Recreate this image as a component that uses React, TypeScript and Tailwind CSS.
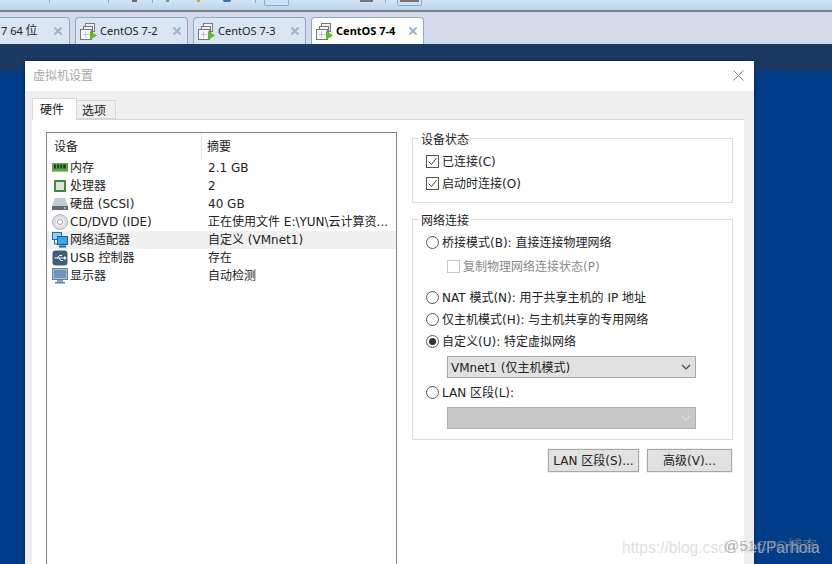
import type { ReactNode } from "react";

function VmIcon() {
  return (
    <svg width="17" height="17" viewBox="0 0 17 17" className="shrink-0">
      <rect x="5.5" y="0.5" width="9" height="8" fill="#f2f2f2" stroke="#777" />
      <rect x="3.500" y="3.500" width="9" height="8" fill="#f2f2f2" stroke="#777" />
      <rect x="0.5" y="6.500" width="11" height="10" fill="#f8f8f8" stroke="#777" />
      <path d="M5.500 8.500v6M3 11.500h6" stroke="#b9c6cf" />
      <path d="M10 8l7 4.500-7 4.500z" fill="#5cb82c" />
    </svg>
  );
}

function TabClose() {
  return (
    <svg width="8" height="8" viewBox="0 0 8 8" className="shrink-0">
      <path d="M0.500 0.500l7 7M7.500 0.500l-7 7" stroke="#9db4cc" strokeWidth="2" />
    </svg>
  );
}

function VmTab({ label, active }: { label: string; active?: boolean }) {
  return (
    <div
      className={`flex h-[27px] w-[113px] items-center rounded-t-[4px] border border-b-0 border-[#8fa8c4] pr-[6px] pl-[4px] font-['Noto_Sans','Noto_Sans_CJK_SC',sans-serif] text-[11px] ${
        active ? "bg-white font-bold text-black" : "bg-[#d9e5f3] text-[#222]"
      }`}
    >
      <VmIcon />
      <span className="ml-[3px] flex-1 whitespace-nowrap">{label}</span>
      <TabClose />
    </div>
  );
}

function MemoryIcon() {
  return (
    <svg width="16" height="16" viewBox="0 0 16 16">
      <rect x="0" y="3" width="16" height="8" fill="#5aa845" />
      <path d="M2 4.500h2v4H2zM5 4.500h2v4H5zM8 4.500h2v4H8zM11 4.500h3v4h-3z" fill="#2f3a2a" />
      <path d="M0 11h16v1H0z" fill="#9cc97e" />
    </svg>
  );
}

function CpuIcon() {
  return (
    <svg width="16" height="16" viewBox="0 0 16 16">
      <rect x="2" y="2" width="12" height="12" fill="#3d8a44" />
      <rect x="4" y="4" width="8" height="8" fill="#dfe6d8" />
    </svg>
  );
}

function DiskIcon() {
  return (
    <svg width="16" height="16" viewBox="0 0 16 16">
      <path d="M3 2h10l3 8H0z" fill="#c3c9d2" />
      <rect x="0" y="10" width="16" height="4" fill="#5f6a79" />
      <rect x="12" y="11.500" width="2" height="1" fill="#dfe6ee" />
    </svg>
  );
}

function CdIcon() {
  return (
    <svg width="16" height="16" viewBox="0 0 16 16">
      <circle cx="8" cy="8" r="7.500" fill="#dcdde0" stroke="#b4b4b8" />
      <circle cx="8" cy="8" r="4.500" fill="#eeeef0" />
      <circle cx="8" cy="8" r="2.500" fill="#fff" stroke="#a4a4a8" />
    </svg>
  );
}

function NetworkIcon() {
  return (
    <svg width="16" height="16" viewBox="0 0 16 16">
      <rect x="0.500" y="0.500" width="9" height="7" fill="#8fd0f4" stroke="#1b6fae" />
      <path d="M2.500 8v4h3" stroke="#1b6fae" fill="none" />
      <rect x="5.500" y="4.500" width="10" height="8" fill="#38a8ea" stroke="#12609e" />
      <path d="M7 14.500h7" stroke="#12609e" strokeWidth="2" />
    </svg>
  );
}

function UsbIcon() {
  return (
    <svg width="16" height="16" viewBox="0 0 16 16">
      <rect x="0.500" y="0.500" width="15" height="15" rx="3" fill="#3f5d7c" />
      <path d="M2.500 8h10M5 8l2.500-2.500H10M7 8l1.500 2.500H11" stroke="#fff" fill="none" />
      <path d="M15 8l-3-2v4z" fill="#fff" />
    </svg>
  );
}

function DisplayIcon() {
  return (
    <svg width="16" height="16" viewBox="0 0 16 16">
      <rect x="0.500" y="0.500" width="15" height="11" fill="#a9bfd8" stroke="#6b7f96" />
      <rect x="2" y="2" width="12" height="8" fill="#6d93bf" />
      <path d="M5 12h6v2H5z" fill="#8ea0b4" />
      <path d="M3 14h10v1.500H3z" fill="#6b7f96" />
    </svg>
  );
}

const devices: { icon: ReactNode; name: string; summary: string; selected?: boolean }[] = [
  { icon: <MemoryIcon />, name: "内存", summary: "2.1 GB" },
  { icon: <CpuIcon />, name: "处理器", summary: "2" },
  { icon: <DiskIcon />, name: "硬盘 (SCSI)", summary: "40 GB" },
  { icon: <CdIcon />, name: "CD/DVD (IDE)", summary: "正在使用文件 E:\\YUN\\云计算资..." },
  { icon: <NetworkIcon />, name: "网络适配器", summary: "自定义 (VMnet1)", selected: true },
  { icon: <UsbIcon />, name: "USB 控制器", summary: "存在" },
  { icon: <DisplayIcon />, name: "显示器", summary: "自动检测" },
];

function CheckBox({ label, checked, disabled }: { label: string; checked?: boolean; disabled?: boolean }) {
  return (
    <div className={`flex h-[22px] items-center ${disabled ? "text-[#8a8a8a]" : "text-[#222]"}`}>
      <span
        className={`flex size-[13px] items-center justify-center border ${
          disabled ? "border-[#c8c8c8]" : "border-[#555]"
        }`}
      >
        {checked ? (
          <svg width="11" height="11" viewBox="0 0 11 11">
            <path d="M1.500 5.500l3 3 5-6.500" fill="none" stroke="#444" />
          </svg>
        ) : null}
      </span>
      <span className="ml-[3px] pt-[2px] whitespace-nowrap">{label}</span>
    </div>
  );
}

function Radio({ label, checked }: { label: string; checked?: boolean }) {
  return (
    <div className="flex h-[22px] items-center text-[#222]">
      <span className="flex size-[13px] items-center justify-center rounded-full border border-[#555]">
        {checked ? <span className="size-[7px] rounded-full bg-[#333]" /> : null}
      </span>
      <span className="ml-[3px] pt-[2px] whitespace-nowrap">{label}</span>
    </div>
  );
}

function Chevron({ color }: { color: string }) {
  return (
    <svg width="10" height="6" viewBox="0 0 10 6">
      <path d="M1 1l4 4 4-4" fill="none" stroke={color} strokeWidth="1.200" />
    </svg>
  );
}

function ToolbarTick({ className }: { className: string }) {
  return <span className={`h-[3px] w-px shrink-0 bg-[#8fa8c4] ${className}`} />;
}

export default function App() {
  return (
    <div className="relative flex h-[564px] w-[832px] flex-col overflow-hidden bg-[#003c88] font-['DejaVu_Sans','Noto_Sans_CJK_SC',sans-serif] text-[12px]">
      {/* app toolbar, only its bottom edge is in the shot */}
      <div className="flex h-[10px] items-start bg-gradient-to-b from-[#d3e3f3] to-[#bcd4ec]">
        <ToolbarTick className="ml-[49px]" />
        <ToolbarTick className="ml-[58px]" />
        <span className="ml-[23px] h-[2px] w-[5px] shrink-0 bg-[#6d6d6d]" />
        <ToolbarTick className="ml-[15px]" />
        <span className="ml-[13px] h-[2px] w-[3px] shrink-0 bg-[#6f9a72]" />
        <span className="ml-[28px] h-[2px] w-[3px] shrink-0 bg-[#e09a3c]" />
        <span className="ml-[23px] h-[2px] w-[8px] shrink-0 rounded-b-full bg-[#2f6fb5]" />
        <ToolbarTick className="ml-[24px]" />
        <span className="ml-[8px] h-[6px] w-[25px] shrink-0 rounded-b-[2px] border border-t-0 border-[#8fa8c4] bg-[#cfe0f6]" />
        <span className="ml-[71px] h-[2px] w-[13px] shrink-0 bg-[#77746f]" />
        <ToolbarTick className="ml-[12px]" />
        <span className="ml-[11px] h-[6px] w-[25px] shrink-0 rounded-b-[2px] border border-t-0 border-[#8fa8c4] bg-[#cfe0f6] px-[2px]">
          <span className="block h-[2px] bg-[#77746f]" />
        </span>
      </div>
      <div className="h-[2px] bg-[#7c7f85]" />
      <div className="flex h-[32px] items-end gap-[5px] bg-[#d5d9ec]">
        <div className="flex h-[27px] w-[70px] items-center justify-between rounded-tr-[4px] border-t border-r border-[#8fa8c4] bg-[#d9e5f3] pr-[7px] pl-px font-['Noto_Sans','Noto_Sans_CJK_SC',sans-serif] text-[11px] text-[#222]">
          <span className="whitespace-nowrap">
            7 64 <span className="text-[12px]">位</span>
          </span>
          <TabClose />
        </div>
        <VmTab label="CentOS 7-2" />
        <VmTab label="CentOS 7-3" />
        <VmTab label="CentOS 7-4" active />
      </div>
      <div className="relative flex-1">
        <div className="h-[27px] bg-[#1a3a63]" />
        <div className="absolute top-[17px] left-[25px] flex h-[503px] w-[729px] flex-col bg-[#efefef] shadow-[0_0_3px_rgba(0,0,0,0.5)]">
          <div className="flex h-[30px] items-center justify-between bg-white pr-[10px] pl-[8px] text-[#a8a8a8]">
            <span>虚拟机设置</span>
            <svg width="11" height="11" viewBox="0 0 11 11" className="mb-[1px]">
              <path d="M0.500 0.500l10 10M10.500 0.500l-10 10" stroke="#888" />
            </svg>
          </div>
          <div className="flex-1 pr-[10px] pl-[7px]">
            <div className="flex h-[28px] items-end text-[#222]">
              <div className="-mb-px flex h-[22px] w-[45px] items-center justify-center border border-b-0 border-[#d8d8d8] bg-white pr-[5px]">
                硬件
              </div>
              <div className="flex h-[19px] w-[39px] items-center justify-center border border-l-0 border-[#d8d8d8] pt-[2px] pr-[4px]">
                选项
              </div>
            </div>
            <div className="flex h-[445px] gap-[15px] border-t border-[#d8d8d8] bg-white pt-[12px] pl-[14px]">
              <div className="w-[351px] border border-b-0 border-[#828790] text-[#222]">
                <div className="flex h-[26px]">
                  <div className="w-[155px] border-r border-[#e6e6e6] pt-[2px] pl-[7px] leading-[25px]">设备</div>
                  <div className="flex-1 pt-[2px] pl-[5px] leading-[25px]">摘要</div>
                </div>
                {devices.map((device) => (
                  <div key={device.name} className={`flex h-[18px] items-center ${device.selected ? "bg-[#f0f0f0]" : ""}`}>
                    <div className="flex w-[161px] items-center whitespace-nowrap">
                      <span className="ml-[5px] flex w-[16px] justify-center">{device.icon}</span>
                      <span className="ml-[2px]">{device.name}</span>
                    </div>
                    <span className="whitespace-nowrap">{device.summary}</span>
                  </div>
                ))}
              </div>
              <div className="flex w-[321px] flex-col">
                <fieldset className="relative mt-[6px] h-[65px] border border-[#dcdcdc] pt-[11px] pl-[13px]">
                  <span className="absolute -top-[6px] left-[7px] bg-white px-[1px] leading-[14px] text-[#222]">设备状态</span>
                  <CheckBox label="已连接(C)" checked />
                  <CheckBox label="启动时连接(O)" checked />
                </fieldset>
                <fieldset className="relative mt-[16px] h-[221px] border border-[#dcdcdc] pt-[11px] pl-[13px]">
                  <span className="absolute -top-[6px] left-[7px] bg-white px-[1px] leading-[14px] text-[#222]">网络连接</span>
                  <Radio label="桥接模式(B): 直接连接物理网络" />
                  <div className="mt-[2px] ml-[21px]">
                    <CheckBox label="复制物理网络连接状态(P)" disabled />
                  </div>
                  <div className="mt-[9px]">
                    <Radio label="NAT 模式(N): 用于共享主机的 IP 地址" />
                    <Radio label="仅主机模式(H): 与主机共享的专用网络" />
                    <Radio label="自定义(U): 特定虚拟网络" checked />
                  </div>
                  <div className="mt-[4px] ml-[21px] flex h-[22px] w-[249px] items-center justify-between border border-[#a8a8a8] bg-[#e1e1e1] pr-[4px] pl-[3px] text-[#222]">
                    <span className="pt-[2px]">VMnet1 (仅主机模式)</span>
                    <Chevron color="#444" />
                  </div>
                  <div className="mt-[3px]">
                    <Radio label="LAN 区段(L):" />
                  </div>
                  <div className="mt-[4px] ml-[21px] flex h-[22px] w-[249px] items-center justify-end border border-[#b0b0b0] bg-[#c8c8c8] pr-[4px]">
                    <Chevron color="#e0e0e0" />
                  </div>
                </fieldset>
                <div className="mt-[9px] flex justify-end gap-[8px] pr-[1px] text-[#222]">
                  <button className="h-[23px] w-[91px] border border-[#a8a8a8] bg-[#e1e1e1] shadow-[0_0_0_1px_#f0f0f0]">LAN 区段(S)...</button>
                  <button className="h-[23px] w-[85px] border border-[#a8a8a8] bg-[#e1e1e1] shadow-[0_0_0_1px_#f0f0f0]">高级(V)...</button>
                </div>
              </div>
            </div>
          </div>
        </div>
      </div>
      {/* blog watermarks over the shot */}
      <span className="absolute top-[536px] left-[622px] font-['Liberation_Sans',sans-serif] text-[15.6px] whitespace-nowrap text-[#d4d4d4] opacity-70">
        https://blog.csdn.net/Parhoia
      </span>
      <span className="absolute top-[535px] left-[724px] font-['Liberation_Sans','Noto_Sans_CJK_SC',sans-serif] text-[15px] whitespace-nowrap text-[#888] opacity-60">
        @51CTO博客
      </span>
    </div>
  );
}
